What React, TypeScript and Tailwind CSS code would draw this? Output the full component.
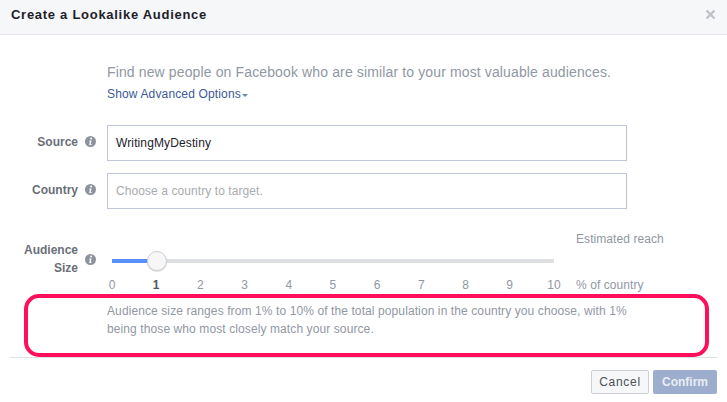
import React from "react";

const font = { fontFamily: '"Liberation Sans", Arial, sans-serif' };

const InfoIcon: React.FC = () => (
  <svg width="11" height="11" viewBox="0 0 11 11" className="shrink-0">
    <circle cx="5.5" cy="5.5" r="5.5" fill="#8d929f" />
    <circle cx="6.1" cy="2.6" r="1" fill="#fff" />
    <path d="M4.4 4.6h2.1L5.8 8.1h.8l-.2.9H4.2l.7-3.5h-.7z" fill="#fff" />
  </svg>
);

const Label: React.FC<{ children: React.ReactNode }> = ({ children }) => (
  <div className="flex w-[96px] shrink-0 items-center justify-end gap-[7px] text-right text-[12px] font-bold leading-[18px] text-[#6b6f78]">
    <span>{children}</span>
    <InfoIcon />
  </div>
);

const ticks = ["0", "1", "2", "3", "4", "5", "6", "7", "8", "9", "10"];

export default function App() {
  return (
    <div className="relative h-[402px] w-[727px] overflow-hidden bg-white" style={font}>
      <header className="flex h-[35px] items-start justify-between border-b border-[#e5e6e9] bg-[#f6f7f9] px-[11px] pt-[7px]">
        <h1 className="text-[13px] font-bold leading-[16px] tracking-[0.72px] text-[#1d2129]">Create a Lookalike Audience</h1>
        <svg width="11" height="11" viewBox="0 0 11 11" className="mt-[2px]">
          <path d="M1.5 1.5l8 8M9.5 1.5l-8 8" stroke="#bfc2c9" strokeWidth="2.4" />
        </svg>
      </header>

      <section className="pl-[107px] pt-[28px]">
        <p className="text-[14px] leading-[18px] tracking-[0.13px] text-[#9197a3]">
          Find new people on Facebook who are similar to your most valuable audiences.
        </p>
        <a className="mt-[5px] flex items-center gap-[1px] text-[12px] leading-[16px] tracking-[0.15px] text-[#3b5998]">
          Show Advanced Options
          <span className="mt-[2px] border-x-[3px] border-t-[3px] border-x-transparent border-t-[#6d84b4]" />
        </a>
      </section>

      <section className="mt-[23px] flex flex-col gap-[12px] pr-[100px]">
        <div className="flex items-center gap-[11px] pb-[3px]">
          <Label>Source</Label>
          <div className="mb-[-3px] flex h-[36px] flex-1 items-center border border-[#bdc7d8] pl-[8px] text-[12px] tracking-[0.12px] text-[#1d2129]">
            WritingMyDestiny
          </div>
        </div>
        <div className="flex items-center gap-[11px] pb-[3px]">
          <Label>Country</Label>
          <div className="mb-[-3px] flex h-[36px] flex-1 items-center border border-[#bdc7d8] pl-[8px] text-[12px] tracking-[0.08px] text-[#a9abaf]">
            Choose a country to target.
          </div>
        </div>
      </section>

      <section className="mt-[22px] flex">
        <div className="flex w-[96px] shrink-0 items-center justify-end gap-[7px] self-start pt-[10px] text-right text-[12px] font-bold leading-[18px] text-[#6b6f78]">
          <span>
            Audience
            <br />
            Size
          </span>
          <InfoIcon />
        </div>
        <div className="ml-[16px] w-[442px]">
          <div className="relative mt-[28px] h-[4px] bg-[#dddfe2]">
            <div className="h-[4px] w-[36px] bg-[#5890ff]" />
            <div className="absolute left-[35px] top-[-8px] h-[20px] w-[20px] rounded-full border border-[#ccd0d5] bg-[#f7f7f7] shadow-[0_1px_1px_rgba(0,0,0,0.15)]" />
          </div>
          <div className="mt-[14px] flex justify-between text-[12px] leading-[16px] text-[#9197a3]">
            {ticks.map((t) => (
              <span key={t} className={`flex w-0 justify-center ${t === "1" ? "font-bold text-[#4e5665]" : ""}`}>
                {t}
              </span>
            ))}
          </div>
        </div>
        <div className="ml-[22px] flex flex-col text-[12px] leading-[16px] tracking-[0.07px] text-[#9197a3]">
          <span>Estimated reach</span>
          <span className="mt-[30px]">% of country</span>
        </div>
      </section>

      <p className="mt-[9px] w-[532px] pl-[107px] text-[12px] leading-[18px] tracking-[0.1px] text-[#9197a3] box-content">
        Audience size ranges from 1% to 10% of the total population in the country you choose, with 1% being those who most closely match your source.
      </p>

      <footer className="mx-[10px] mt-[19px] flex justify-end gap-[4px] border-t border-[#dddfe2] pt-[12px]">
        <button className="h-[24px] w-[58px] rounded-[2px] border border-[#ccd0d5] bg-[#f6f7f9] text-[12px] tracking-[0.7px] text-[#4b4f56]">
          Cancel
        </button>
        <button className="h-[24px] w-[64px] rounded-[2px] bg-[#9cadcd] text-[12px] font-bold text-[#e9ecf3]">
          Confirm
        </button>
      </footer>

      {/* hand drawn highlight over the hint text */}
      <div className="absolute left-[24px] top-[294px] h-[63px] w-[685px] rounded-[15px] border-[4px] border-[#ff0f5b]" />
    </div>
  );
}
